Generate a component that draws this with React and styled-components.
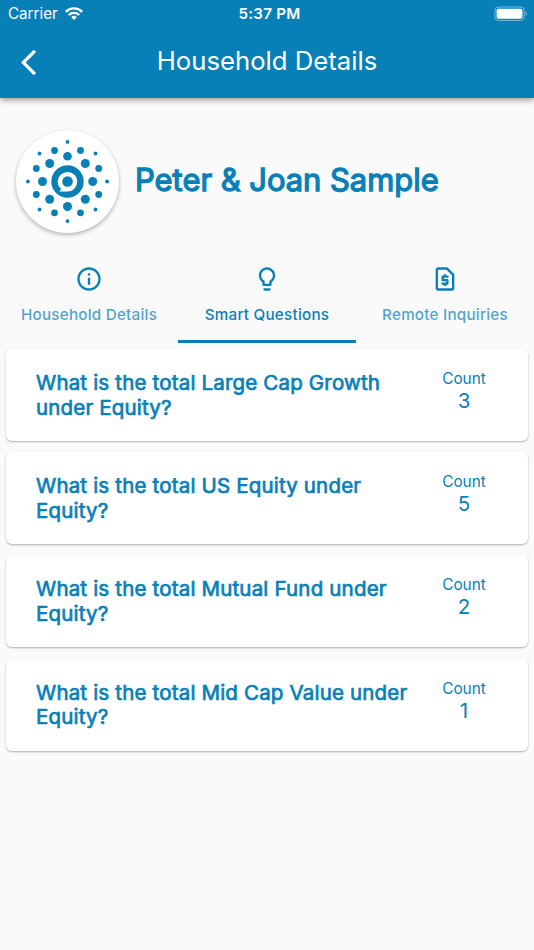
import React from 'react';
import styled, { createGlobalStyle } from 'styled-components';
import { MdArrowBackIos, MdInfoOutline, MdLightbulbOutline, MdOutlineRequestPage } from 'react-icons/md';

const tabs = [
  { label: 'Household Details', icon: MdInfoOutline },
  { label: 'Smart Questions', icon: MdLightbulbOutline, active: true },
  { label: 'Remote Inquiries', icon: MdOutlineRequestPage },
];

const questions = [
  { lines: ['What is the total Large Cap Growth', 'under Equity?'], count: 3 },
  { lines: ['What is the total US Equity under', 'Equity?'], count: 5 },
  { lines: ['What is the total Mutual Fund under', 'Equity?'], count: 2 },
  { lines: ['What is the total Mid Cap Value under', 'Equity?'], count: 1 },
];

// rings of dots around the centre of the logo: [x, y, r]
const dots = [
  [0, -25.3, 4.3], [17.8, -18, 4.5], [25.2, 0, 4.5], [17.8, 17.8, 4.5],
  [0, 25, 4.5], [-17.8, 17.8, 4.5], [-25, 0, 4.5], [-17.8, -18, 4.5],
  [13, -31, 3.4], [31.2, -13, 3.4], [31.2, 13, 3.4], [13, 31.3, 3.4],
  [-13, 31.3, 3.4], [-31.2, 13, 3.4], [-31.2, -13, 3.4], [-13, -31, 3.4],
  [0, -39.6, 1.9], [28, -28, 1.9], [39.6, 0, 1.9], [28, 28, 1.9],
  [0, 39.6, 1.9], [-28, 28, 1.9], [-39.6, 0, 1.9], [-28, -28, 1.9],
];

const App = () => {
  return (
    <Screen>
      <GlobalStyle />
      <Header>
        <StatusBar>
          <Carrier>
            Carrier
            <svg width="18" height="14" viewBox="0 0 18 14" fill="none" stroke="#fff" strokeWidth="2.4">
              <path d="M0.8 4.8a11.6 11.6 0 0 1 16.4 0" />
              <path d="M3.8 8a7.4 7.4 0 0 1 10.4 0" />
              <path d="M9 13 6.2 10.2a4 4 0 0 1 5.6 0z" fill="#fff" stroke="none" />
            </svg>
          </Carrier>
          <Clock>5:37 PM</Clock>
          <Battery>
            <svg width="34" height="16" viewBox="0 0 34 16">
              <rect x="0.9" y="1" width="29.2" height="13.4" rx="3.4" fill="none" stroke="#7fbcda" strokeWidth="1" />
              <rect x="2.6" y="2.7" width="25.8" height="10" rx="1.8" fill="#fff" />
              <path d="M31.6 5.2v5c1.7-.8 1.7-4.2 0-5z" fill="#7fbcda" />
            </svg>
          </Battery>
        </StatusBar>
        <NavBar>
          <BackButton type="button" aria-label="Back">
            <MdArrowBackIos size={31} />
          </BackButton>
          <Title>Household Details</Title>
        </NavBar>
      </Header>

      <Profile>
        <Avatar>
          <svg width="103" height="103" viewBox="-51.5 -51.5 103 103" fill="#0780b8">
            {dots.map(([x, y, r]) => (
              <circle key={`${x},${y}`} cx={x} cy={y} r={r} />
            ))}
            <circle r="16.2" />
            <path d="M-8.2 10H0A9.8 9.8 0 1 0-9.8 0c0 2 .6 4 1.7 5.6L-6.2 7.4z" fill="#fff" />
            <circle r="5.3" />
          </svg>
        </Avatar>
        <Name>Peter &amp; Joan Sample</Name>
      </Profile>

      <TabBar>
        {tabs.map(({ label, icon: Icon, active }) => (
          <Tab key={label} type="button" $active={active}>
            <Icon size={28} />
            <TabLabel $active={active}>{label}</TabLabel>
          </Tab>
        ))}
      </TabBar>

      <List>
        {questions.map(({ lines, count }) => (
          <Card key={lines[0]}>
            <Question>
              {lines.map((line) => (
                <span key={line}>{line}</span>
              ))}
            </Question>
            <Count>
              <CountLabel>Count</CountLabel>
              <CountValue>{count}</CountValue>
            </Count>
          </Card>
        ))}
      </List>
    </Screen>
  );
};

const GlobalStyle = createGlobalStyle`
  * {
    box-sizing: border-box;
  }

  body {
    margin: 0;
    background: #fafafa;
  }

  button {
    padding: 0;
    border: 0;
    background: none;
    color: inherit;
    font: inherit;
  }
`;

const Screen = styled.div`
  width: 534px;
  height: 950px;
  overflow: hidden;
  background: #fafafa;
  color: #0780b8;
  font-family: Inter, sans-serif;
  white-space: nowrap;
`;

const Header = styled.header`
  height: 98px;
  background: #0780b8;
  color: #fff;
  box-shadow: 0 2px 6px rgba(0, 0, 0, 0.4);
`;

const StatusBar = styled.div`
  display: grid;
  grid-template-columns: 1fr auto 1fr;
  align-items: center;
  height: 27px;
  padding: 0 6px 0 8px;
  font-size: 15.2px;
`;

const Carrier = styled.div`
  display: flex;
  align-items: center;
  gap: 7px;
`;

const Clock = styled.div`
  padding-left: 3px;
  font-weight: 600;
  letter-spacing: 0.25px;
`;

const Battery = styled.div`
  display: flex;
  justify-content: flex-end;
`;

const NavBar = styled.div`
  display: grid;
  grid-template-columns: 60px 1fr 60px;
  align-items: center;
  height: 69px;
`;

const BackButton = styled.button`
  display: flex;
  padding: 1px 0 0 21px;
`;

const Title = styled.h1`
  margin: 0;
  padding-bottom: 1px;
  font-size: 25.7px;
  font-weight: 400;
  line-height: 36px;
  text-align: center;
`;

const Profile = styled.section`
  display: flex;
  align-items: center;
  gap: 16px;
  height: 166px;
  padding-left: 16px;
`;

const Avatar = styled.div`
  width: 103px;
  height: 103px;
  border-radius: 50%;
  background: #fff;
  box-shadow: 0 2px 4px rgba(0, 0, 0, 0.28);
`;

const Name = styled.h2`
  margin: 0;
  padding-bottom: 3px;
  font-size: 30.9px;
  font-weight: 400;
  -webkit-text-stroke: 1.3px currentColor;
`;

const TabBar = styled.nav`
  display: grid;
  grid-template-columns: repeat(3, 1fr);
  height: 79px;
`;

const Tab = styled.button`
  display: flex;
  flex-direction: column;
  align-items: center;
  padding-top: 1px;
  border-bottom: 3px solid ${({ $active }) => ($active ? '#0780b8' : 'transparent')};
`;

const TabLabel = styled.span`
  margin-top: 12px;
  font-size: 15.2px;
  font-weight: 450;
  line-height: 20px;
  letter-spacing: 0.25px;
  opacity: ${({ $active }) => ($active ? 1 : 0.7)};
`;

const List = styled.main`
  display: flex;
  flex-direction: column;
  gap: 11.2px;
  padding: 6px 6px 0;
`;

const Card = styled.article`
  display: flex;
  justify-content: space-between;
  height: 92px;
  padding: 22px 0 0 30px;
  border-radius: 6px;
  background: #fff;
  box-shadow: 0 1px 2px rgba(0, 0, 0, 0.3);
`;

const Question = styled.div`
  display: flex;
  flex: 1;
  flex-direction: column;
  min-width: 0;
  font-size: 20.5px;
  line-height: 24.5px;
  letter-spacing: 0.18px;
  -webkit-text-stroke: 0.7px currentColor;
`;

const Count = styled.div`
  flex: none;
  width: 128px;
  margin-top: -2px;
  text-align: center;
`;

const CountLabel = styled.div`
  font-size: 15.4px;
  line-height: 19px;
`;

const CountValue = styled.div`
  font-size: 20.5px;
  line-height: 25px;
`;

export default App;
